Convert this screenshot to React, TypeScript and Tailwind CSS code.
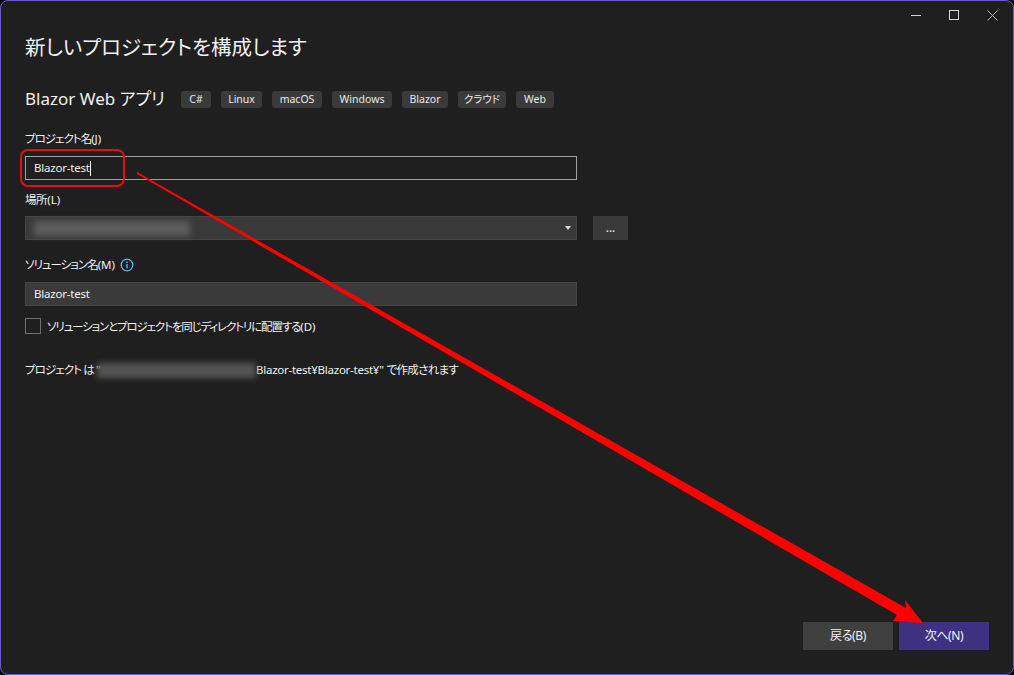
const font = "font-['Noto_Sans','Noto_Sans_CJK_JP',sans-serif] [font-feature-settings:'palt']";

const tags = [
  { label: "C#", w: "w-[30px]" },
  { label: "Linux", w: "w-[41px]" },
  { label: "macOS", w: "w-[50px]" },
  { label: "Windows", w: "w-[60px]" },
  { label: "Blazor", w: "w-[46px]" },
  { label: "クラウド", w: "w-[48px]" },
  { label: "Web", w: "w-[38px]" },
];

function Arrow() {
  return (
    <svg className="absolute left-0 top-0 pointer-events-none" width="1014" height="675" viewBox="0 0 1014 675" aria-hidden>
      <polygon points="137,172 906,608 905,600 923,623 893,621 897,615 137,174" fill="#ff0000" />
    </svg>
  );
}

export default function App() {
  return (
    <div className={`${font} relative w-[1014px] h-[675px] bg-black overflow-hidden`}>
      <div className="flex flex-col w-full h-full bg-[#1f1f1f] border border-[#6a5acd] rounded-[8px] text-[#f1f1f1]">
        {/* window controls */}
        <div className="flex justify-end items-center h-[28px] pr-[15px] gap-[26px] shrink-0">
          <div className="w-[10px] h-px bg-[#d0d0d0] mr-[2px]" />
          <div className="w-[10px] h-[10px] border border-[#d8d8d8]" />
          <svg width="11" height="11" viewBox="0 0 11 11" className="ml-[2px]">
            <path d="M0.5 0.5 10.5 10.5M10.5 0.5 0.5 10.5" stroke="#b8b8b8" strokeWidth="1" fill="none" />
          </svg>
        </div>

        <div className="flex flex-col flex-1 pl-[24px]">
          <h1 className="text-[20.5px] leading-[36px] font-normal h-[36px]">新しいプロジェクトを構成します</h1>

          <div className="flex items-center mt-[22px] h-[24px]">
            <span className="text-[17px] w-[156px] whitespace-nowrap">Blazor Web アプリ</span>
            <div className="flex gap-[10px]">
              {tags.map((t) => (
                <span
                  key={t.label}
                  className={`${t.w} h-[17px] rounded-[3px] bg-[#3a3a3a] text-[10.5px] leading-[17px] text-center text-[#e8e8e8]`}
                >
                  {t.label}
                </span>
              ))}
            </div>
          </div>

          <label className="text-[11.5px] leading-[16px] mt-[20px] h-[16px] tracking-[-1px]">
            プロジェクト名<span className="tracking-normal">(J)</span>
          </label>
          <div className="flex items-center w-[552px] h-[24px] mt-[9px] border border-[#a0a0a0] pl-[8px] text-[11.5px] tracking-[-0.2px]">
            <span>Blazor-test</span>
            <span className="w-px h-[15px] bg-white" />
          </div>

          <label className="text-[11.5px] leading-[16px] mt-[12px] h-[16px] tracking-[-0.4px]">
            場所<span className="tracking-normal">(L)</span>
          </label>
          <div className="flex items-center mt-[8px] gap-[16px]">
            <div className="flex items-center justify-between w-[552px] h-[24px] bg-[#3a3a3a] border border-[#444444] pl-[8px] pr-[5px]">
              <div className="w-[156px] h-[15px] bg-[#5c5c5c] blur-[3px]" />
              <div className="w-0 h-0 border-x-[3.5px] border-x-transparent border-t-[4px] border-t-[#d8d8d8]" />
            </div>
            <div className="w-[35px] h-[24px] bg-[#3a3a3a] text-[12px] leading-[24px] text-center">...</div>
          </div>

          <div className="flex items-center mt-[16px] h-[18px] gap-[5px]">
            <label className="text-[11.5px] tracking-[-1px]">
              ソリューション名<span className="tracking-normal">(M)</span>
            </label>
            <svg width="14" height="14" viewBox="0 0 14 14">
              <circle cx="7" cy="7" r="5.8" stroke="#5ab8e8" strokeWidth="1.3" fill="none" />
              <path d="M7 6v4.2M7 3.6v1.3" stroke="#5ab8e8" strokeWidth="1.4" fill="none" />
            </svg>
          </div>
          <div className="flex items-center w-[552px] h-[24px] mt-[8px] bg-[#3a3a3a] border border-[#444444] pl-[8px] text-[11.5px] tracking-[-0.2px]">
            Blazor-test
          </div>

          <div className="flex items-center mt-[12px] h-[16px] gap-[6px]">
            <div className="w-[16px] h-[16px] border border-[#707070]" />
            <span className="text-[11.5px] tracking-[-1.15px] pt-[2px]">
              ソリューションとプロジェクトを同じディレクトリに配置する<span className="tracking-normal">(D)</span>
            </span>
          </div>

          <div className="flex items-center mt-[28px] h-[16px] text-[11.5px]">
            <span className="w-[72px] whitespace-nowrap tracking-[-0.9px]">プロジェクト は "</span>
            <div className="w-[159px] h-[15px] bg-[#555555] blur-[3px]" />
            <span className="whitespace-nowrap tracking-[-0.25px]">Blazor-test¥Blazor-test¥"</span>
            <span className="whitespace-nowrap tracking-[-0.7px] ml-[3px]">で作成されます</span>
          </div>

          <div className="flex justify-end gap-[6px] mt-auto mb-[24px] pr-[24px]">
            <button className="w-[90px] h-[28px] bg-[#3f3f3f] text-[12px] tracking-[-0.4px]">戻る(B)</button>
            <button className="w-[90px] h-[28px] bg-[#3f3182] text-[12px] tracking-[-0.4px]">次へ(N)</button>
          </div>
        </div>
      </div>

      {/* annotations drawn over the screenshot */}
      <div className="absolute left-[20px] top-[149px] w-[105px] h-[38px] rounded-[8px] border-2 border-[#e01010]" />
      <Arrow />
    </div>
  );
}
